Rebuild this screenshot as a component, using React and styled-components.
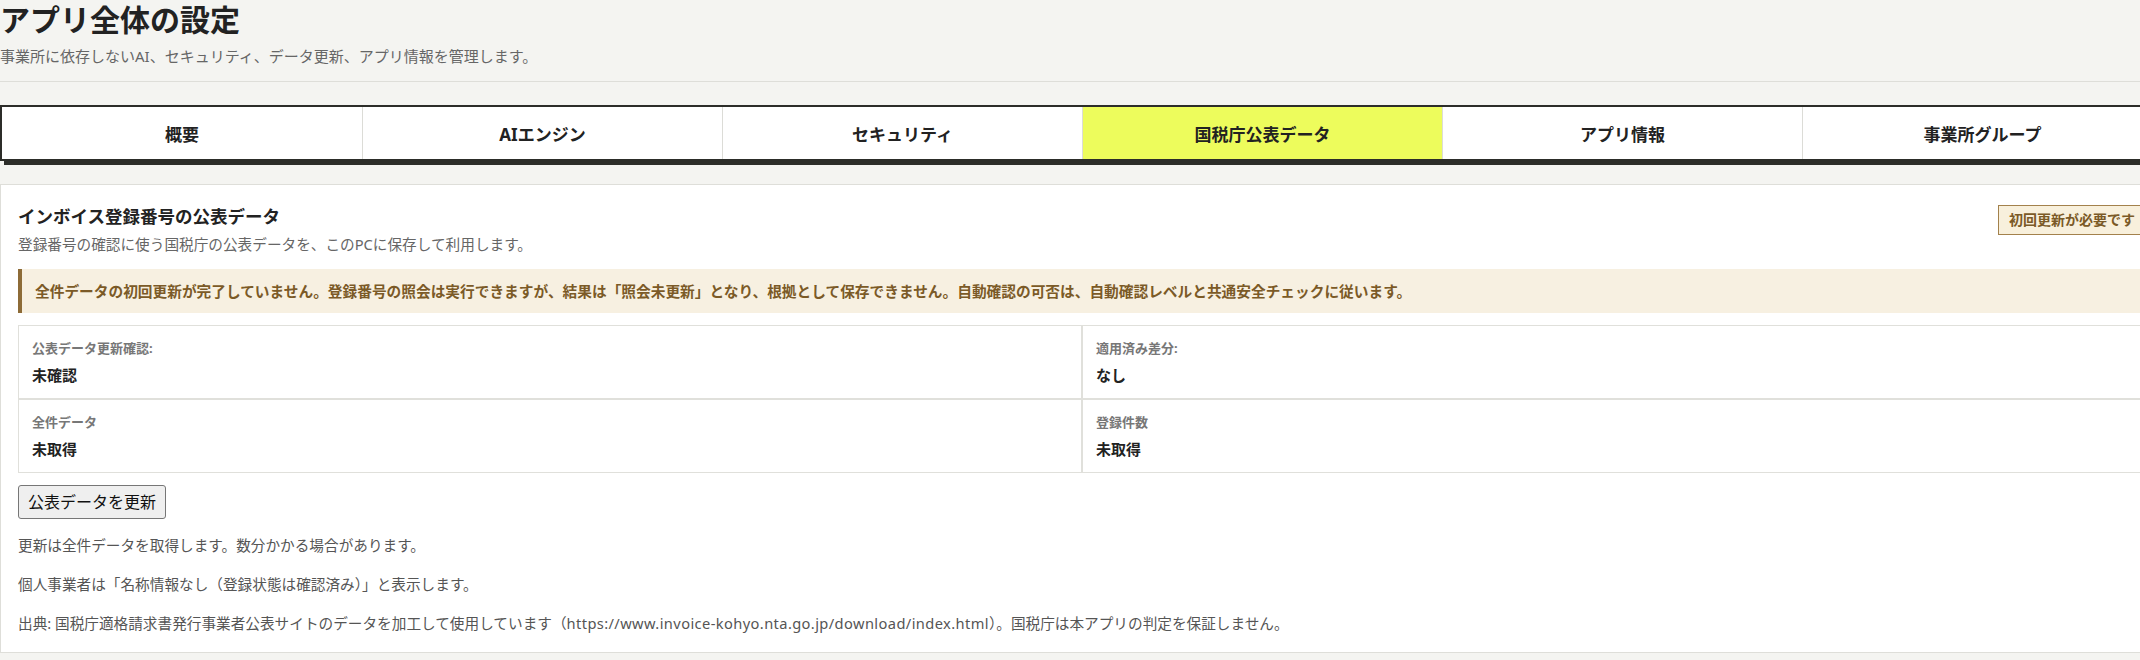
import * as React from 'react'
import styled, { createGlobalStyle } from 'styled-components'

const FONT = `"Noto Sans", "Noto Sans CJK JP", sans-serif`

const GlobalStyle = createGlobalStyle`
  html, body {
    margin: 0;
    padding: 0;
    overflow: hidden;
    background: #f4f4f1;
  }
  body {
    font-family: ${FONT};
    color: #222;
  }
  * {
    box-sizing: border-box;
  }
`

const Page = styled.div`
  width: 2164px;
`

const Header = styled.header`
  padding-bottom: 14px;
  border-bottom: 1px solid #deded9;
`

const Title = styled.h1`
  margin: 0;
  font-size: 30px;
  line-height: 40px;
  font-weight: 700;
  color: #222;
`

const Lead = styled.p`
  margin: 5px 0 0;
  font-size: 15px;
  line-height: 22px;
  color: #666;
`

const TabBar = styled.nav`
  margin-top: 23px;
  display: grid;
  grid-template-columns: repeat(6, 1fr);
  border: 2px solid #2c2d29;
  box-shadow: 4px 4px 0 #2c2d29;
  background: #fff;
`

const Tab = styled.button`
  height: 52px;
  border: 0;
  border-left: 1px solid #dcdcd7;
  background: ${(p) => (p.active ? '#edfc5c' : '#fff')};
  font-family: ${FONT};
  font-size: 17px;
  font-weight: 700;
  color: #222;
  padding: 0;
  cursor: pointer;
  &:first-child {
    border-left: 0;
  }
`

const Card = styled.section`
  margin-top: 23px;
  background: #fff;
  border: 1px solid #deded9;
  padding: 19px 17px 18px;
`

const CardHead = styled.div`
  display: flex;
  justify-content: space-between;
  align-items: flex-start;
`

const CardTitle = styled.h2`
  margin: 0;
  font-size: 17.5px;
  line-height: 24px;
  font-weight: 700;
  color: #222;
`

const CardDesc = styled.p`
  margin: 6px 0 0;
  font-size: 14.65px;
  line-height: 20px;
  color: #666;
`

const Badge = styled.span`
  margin-top: 1px;
  padding: 4px 10px;
  border: 1px solid #a3814c;
  background: #f8f0dc;
  color: #7b5a27;
  font-size: 14px;
  line-height: 20px;
  font-weight: 700;
  white-space: nowrap;
`

const Alert = styled.div`
  margin-top: 15px;
  padding: 12px 14px 12px 13px;
  border-left: 4px solid #8d6b37;
  background: #f7f0e1;
  color: #7b5a27;
  font-size: 14.7px;
  line-height: 20px;
  font-weight: 700;
`

const StatGrid = styled.dl`
  margin: 12px 0 0;
  display: grid;
  grid-template-columns: 1fr 1fr;
`

const Stat = styled.div`
  border: 1px solid #e0e0db;
  padding: 13px 13px 12px;
`

const StatLabel = styled.dt`
  font-size: 13px;
  line-height: 18px;
  font-weight: 700;
  color: #777;
`

const StatValue = styled.dd`
  margin: 7px 0 0;
  font-size: 15px;
  line-height: 22px;
  font-weight: 700;
  color: #222;
`

const Actions = styled.div`
  margin-top: 12px;
`

const Button = styled.button`
  font-family: ${FONT};
  font-size: 16px;
  line-height: 22px;
  padding: 5px 9px;
  color: #111;
  background: #efefef;
  border: 1px solid #767676;
  border-radius: 3px;
`

const Note = styled.p`
  margin: 17px 0;
  font-size: 14.65px;
  line-height: 22px;
  color: #555;
  &:first-of-type {
    margin-top: 15px;
  }
  &:last-child {
    margin-bottom: 0;
  }
`

const Url = styled.span`
  letter-spacing: 0.4px;
`

const TABS = ['概要', 'AIエンジン', 'セキュリティ', '国税庁公表データ', 'アプリ情報', '事業所グループ']

const STATS = [
  { label: '公表データ更新確認:', value: '未確認' },
  { label: '適用済み差分:', value: 'なし' },
  { label: '全件データ', value: '未取得' },
  { label: '登録件数', value: '未取得' },
]

export default function App() {
  const [tab, setTab] = React.useState('国税庁公表データ')

  return (
    <>
      <GlobalStyle />
      <Page>
        <Header>
          <Title>アプリ全体の設定</Title>
          <Lead>事業所に依存しないAI、セキュリティ、データ更新、アプリ情報を管理します。</Lead>
        </Header>

        <TabBar>
          {TABS.map((t) => (
            <Tab key={t} active={tab === t} onClick={() => setTab(t)}>
              {t}
            </Tab>
          ))}
        </TabBar>

        <Card>
          <CardHead>
            <div>
              <CardTitle>インボイス登録番号の公表データ</CardTitle>
              <CardDesc>登録番号の確認に使う国税庁の公表データを、このPCに保存して利用します。</CardDesc>
            </div>
            <Badge>初回更新が必要です</Badge>
          </CardHead>

          <Alert>
            全件データの初回更新が完了していません。登録番号の照会は実行できますが、結果は「照会未更新」となり、根拠として保存できません。自動確認の可否は、自動確認レベルと共通安全チェックに従います。
          </Alert>

          <StatGrid>
            {STATS.map((s) => (
              <Stat key={s.label}>
                <StatLabel>{s.label}</StatLabel>
                <StatValue>{s.value}</StatValue>
              </Stat>
            ))}
          </StatGrid>

          <Actions>
            <Button type="button">公表データを更新</Button>
          </Actions>

          <Note>更新は全件データを取得します。数分かかる場合があります。</Note>
          <Note>個人事業者は「名称情報なし（登録状態は確認済み）」と表示します。</Note>
          <Note>
            出典: 国税庁適格請求書発行事業者公表サイトのデータを加工して使用しています（
            <Url>https://www.invoice-kohyo.nta.go.jp/download/index.html</Url>
            ）。国税庁は本アプリの判定を保証しません。
          </Note>
        </Card>
      </Page>
    </>
  )
}
